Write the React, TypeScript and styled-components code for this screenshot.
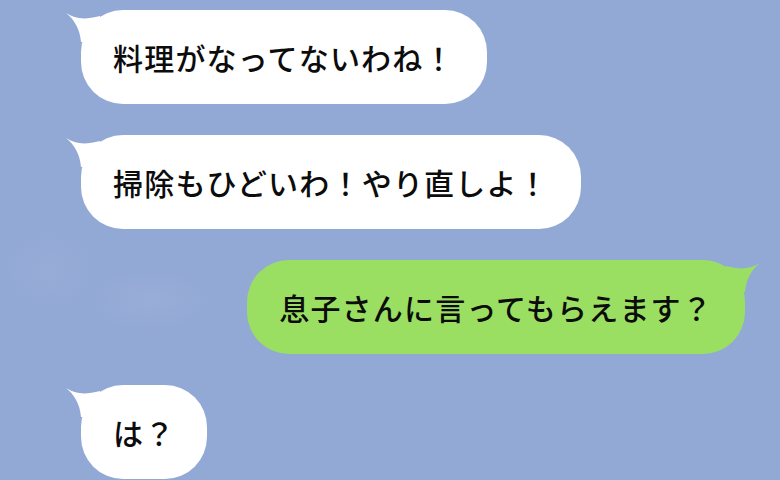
import React from "react";
import styled, { createGlobalStyle } from "styled-components";

const GlobalStyle = createGlobalStyle`
  html, body {
    margin: 0;
    padding: 0;
  }
  body {
    width: 780px;
    height: 480px;
    overflow: hidden;
    background: #93a9d5;
    font-family: "Noto Sans CJK JP", "Noto Sans", sans-serif;
  }
`;

const Screen = styled.div`
  width: 780px;
  height: 480px;
  box-sizing: border-box;
  padding: 10px 35px 0 81px;
  display: flex;
  flex-direction: column;
  gap: 31px;
  background:
    radial-gradient(ellipse 90px 45px at 150px 300px, rgba(162, 182, 222, 0.35), transparent 70%),
    radial-gradient(ellipse 70px 60px at 50px 270px, rgba(160, 180, 220, 0.3), transparent 70%),
    #93a9d5;
`;

const Row = styled.div<{ $mine?: boolean }>`
  display: flex;
  justify-content: ${(p) => (p.$mine ? "flex-end" : "flex-start")};
`;

const Bubble = styled.div<{ $mine?: boolean }>`
  position: relative;
  height: 94px;
  box-sizing: border-box;
  padding: 0 32px;
  display: flex;
  align-items: center;
  border-radius: 42px;
  background: ${(p) => (p.$mine ? "#9bdf62" : "#ffffff")};
  color: #0c0c0c;
  font-size: 30px;
  font-weight: 500;
  letter-spacing: 1.2px;
  white-space: nowrap;
`;

const Tail = styled.svg<{ $mine?: boolean }>`
  position: absolute;
  top: 1px;
  width: 38px;
  height: 34px;
  ${(p) =>
    p.$mine
      ? "right: -15px; transform: scaleX(-1);"
      : "left: -15px;"}
`;

function BubbleTail({ mine, color }: { mine?: boolean; color: string }) {
  return (
    <Tail $mine={mine} viewBox="0 0 38 34">
      <path
        d="M0 2 C9 8 19 9 34 5 L 38 32 L 15 31 C 14 18 8 8 0 2 Z"
        fill={color}
      />
    </Tail>
  );
}

const messages = [
  { text: "料理がなってないわね！", mine: false },
  { text: "掃除もひどいわ！やり直しよ！", mine: false },
  { text: "息子さんに言ってもらえます？", mine: true },
  { text: "は？", mine: false },
];

export default function App() {
  return (
    <>
      <GlobalStyle />
      <Screen>
        {messages.map((m, i) => (
          <Row key={i} $mine={m.mine}>
            <Bubble $mine={m.mine}>
              <BubbleTail mine={m.mine} color={m.mine ? "#9bdf62" : "#ffffff"} />
              {m.text}
            </Bubble>
          </Row>
        ))}
      </Screen>
    </>
  );
}
